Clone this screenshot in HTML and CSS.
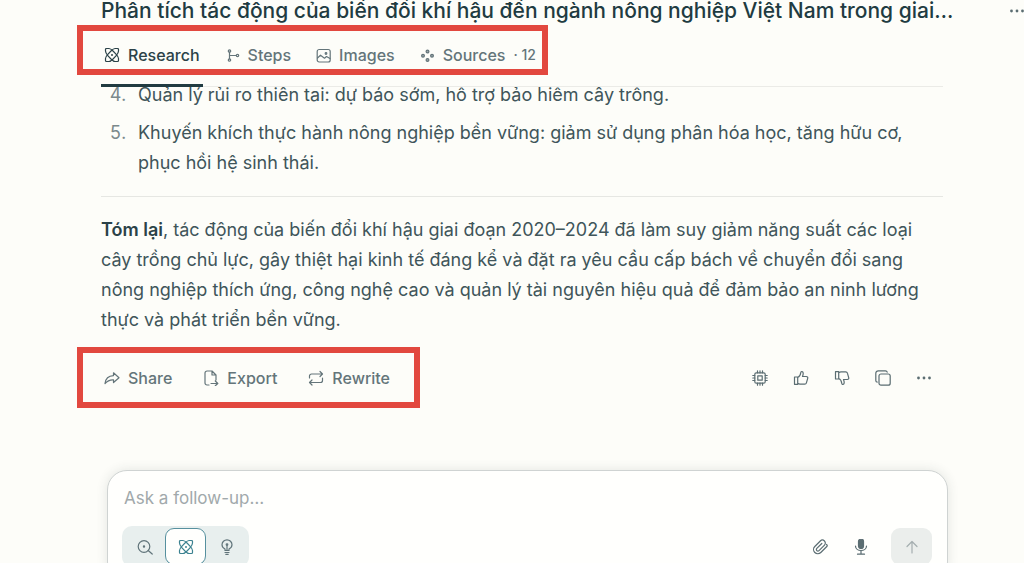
FILE: index.html
```html
<!DOCTYPE html>
<html lang="vi">
<head>
<meta charset="utf-8">
<meta name="viewport" content="width=device-width, initial-scale=1">
<title>Research</title>
<link rel="stylesheet" href="styles.css">
</head>
<body>
<svg class="sprite" aria-hidden="true">
  <symbol id="research" viewBox="0 0 16 16">
    <path d="M1.500 4V2.500q0-1 1-1H5c1.500 0 2.500 1 4 2.500l3 3.200c1.500 1.600 2.500 2.600 2.500 4.300v2q0 1-1 1H11c-1.500 0-2.500-1-4-2.500L4 8.800C2.500 7.200 1.500 6 1.500 4Z"/>
    <path d="M14.500 4V2.500q0-1-1-1H11c-1.500 0-2.500 1-4 2.500L4 7.200c-1.500 1.600-2.500 2.600-2.500 4.300v2q0 1 1 1H5c1.500 0 2.500-1 4-2.500l3-3.200c1.500-1.600 2.500-2.800 2.500-4.800Z"/>
    <circle cx="8" cy="8" r=".4"/>
  </symbol>
  <symbol id="dots" viewBox="0 0 16 16">
    <g fill="currentColor" stroke="none"><circle cx="2.500" cy="8" r="1.400"/><circle cx="8" cy="8" r="1.400"/><circle cx="13.500" cy="8" r="1.400"/></g>
  </symbol>
  <symbol id="thumb" viewBox="0 0 16 16">
    <path d="M1.500 7h3.200v7.300H1.500ZM4.700 7.500c2-.8 2.800-2.500 3.100-5 .2-1.500 2.400-1.300 2.400.8 0 1.200-.3 2.200-.7 3.200h3.800c1.200 0 1.700.8 1.400 1.800l-1.300 4.500c-.2.800-.9 1.300-1.700 1.300H7c-1 0-1.500-.3-2.300-.8Z"/>
  </symbol>
</svg>

<header class="topbar">
  <div class="title-row">
    <h1 class="title">Phân tích tác động của biến đổi khí hậu đến ngành nông nghiệp Việt Nam trong giai…</h1>
    <button class="icon-btn more" aria-label="More"><svg class="icon"><use href="#dots"/></svg></button>
  </div>
  <nav class="tabs">
    <a class="tab active" href="#r"><svg class="icon"><use href="#research"/></svg>Research</a>
    <a class="tab" href="#s"><svg class="icon" viewBox="0 0 16 16"><circle cx="5.500" cy="4" r="1.200"/><circle cx="5.500" cy="13" r="1.200"/><circle cx="13.500" cy="8.500" r="1.200"/><path d="M5.500 5.200v6.600M5.500 8.500h6.800"/></svg>Steps</a>
    <a class="tab" href="#i"><svg class="icon" viewBox="0 0 16 16"><rect x="2.200" y="2.500" width="13" height="12.500" rx="2"/><path d="m2.500 11 3-2.800 4 3 2-1.700 3.500 2"/><circle cx="11" cy="6.500" r=".8"/></svg>Images</a>
    <a class="tab" href="#c"><svg class="icon" viewBox="0 0 16 16"><g fill="currentColor" fill-opacity=".6"><circle cx="8.500" cy="4.500" r="1.400"/><circle cx="8.500" cy="13" r="1.400"/><circle cx="4" cy="8.800" r="1.400"/><circle cx="13" cy="8.800" r="1.400"/></g></svg>Sources <span class="count">· 12</span></a>
  </nav>
</header>

<main class="answer">
  <ol class="list" start="4">
    <li>Quản lý rủi ro thiên tai: dự báo sớm, hỗ trợ bảo hiểm cây trồng.</li>
    <li>Khuyến khích thực hành nông nghiệp bền vững: giảm sử dụng phân hóa học, tăng hữu cơ, phục hồi hệ sinh thái.</li>
  </ol>
  <hr class="rule">
  <p class="summary"><strong>Tóm lại</strong>, tác động của biến đổi khí hậu giai đoạn 2020–2024 đã làm suy giảm năng suất các loại cây trồng chủ lực, gây thiệt hại kinh tế đáng kể và đặt ra yêu cầu cấp bách về chuyển đổi sang nông nghiệp thích ứng, công nghệ cao và quản lý tài nguyên hiệu quả để đảm bảo an ninh lương thực và phát triển bền vững.</p>
  <div class="actions">
    <div class="main-actions">
      <button class="action"><svg class="icon" viewBox="0 0 16 16"><path d="M9.500 2.800 15 7.700l-5.500 4.800V9.800C6 9.600 3.500 10.500 1 13.500 1.500 9 4.500 5.900 9.500 5.600Z"/></svg>Share</button>
      <button class="action"><svg class="icon" viewBox="0 0 16 16"><path d="M6 15H4a2 2 0 0 1-2-2V3a2 2 0 0 1 2-2h5l4 4v5M9 1v4h4M8 13.500h6.500M12.300 11l2.500 2.500-2.500 2.300"/></svg>Export</button>
      <button class="action"><svg class="icon" viewBox="0 0 16 16"><path d="M1.500 8V6a2 2 0 0 1 2-2h10.800M12 1.500 14.500 4 12 6.500M14.500 8v2.500a2 2 0 0 1-2 2H1.700M4 10l-2.500 2.500L4 15"/></svg>Rewrite</button>
    </div>
    <div class="side-actions">
      <button class="icon-btn" aria-label="Model"><svg class="icon" viewBox="0 0 16 16"><rect x="2.800" y="2.800" width="10.400" height="10.400" rx="1.500"/><rect x="5.800" y="5.800" width="4.400" height="4.400"/><path d="M5.500.8v2M8 .8v2M10.500.8v2M5.500 13.200v2M8 13.200v2M10.500 13.200v2M.8 5.500h2M.8 8h2M.8 10.500h2M13.200 5.500h2M13.200 8h2M13.200 10.500h2"/></svg></button>
      <button class="icon-btn" aria-label="Like"><svg class="icon"><use href="#thumb"/></svg></button>
      <button class="icon-btn" aria-label="Dislike"><svg class="icon flip"><use href="#thumb"/></svg></button>
      <button class="icon-btn" aria-label="Copy"><svg class="icon" viewBox="0 0 16 16"><rect x="4" y="4" width="11.200" height="11.200" rx="2"/><path d="M2.200 12.200C1.300 12 .8 11.300.8 10.500V3.300A2.500 2.500 0 0 1 3.300.8h7.200c.8 0 1.500.5 1.700 1.400"/></svg></button>
      <button class="icon-btn" aria-label="More options"><svg class="icon"><use href="#dots"/></svg></button>
    </div>
  </div>
</main>

<form class="composer">
  <input class="prompt" type="text" placeholder="Ask a follow-up…" aria-label="Ask a follow-up">
  <div class="tools">
    <div class="modes">
      <label class="mode"><input type="radio" name="mode" aria-label="Search"><svg class="icon" viewBox="0 0 16 16"><circle cx="7" cy="7.500" r="5.800"/><path d="m11.200 11.500 4 3.500"/><circle cx="7" cy="7.500" r=".6"/></svg></label>
      <label class="mode"><input type="radio" name="mode" aria-label="Research" checked><svg class="icon"><use href="#research"/></svg></label>
      <label class="mode"><input type="radio" name="mode" aria-label="Labs"><svg class="icon" viewBox="0 0 16 16"><path d="M6 11.500V10C4 9 3 7.700 3 5.800a5 5 0 0 1 10 0C13 7.700 12 9 10 10v1.500ZM8 6.500v5M6 13.500h4M6.800 15.300h2.400"/><circle cx="8" cy="5.600" r=".8"/></svg></label>
    </div>
    <div class="send-tools">
      <button type="button" class="icon-btn" aria-label="Attach"><svg class="icon" viewBox="0 0 16 16"><path d="m14.800 7.500-6 6a4.200 4.200 0 0 1-6-6l5.500-5.500a2.900 2.900 0 0 1 4.200 4.100L7 11.600a1.500 1.500 0 0 1-2.200-2.200l5-4.900M14.500 5.500c1 .8 1 1.300.3 2"/></svg></button>
      <button type="button" class="icon-btn" aria-label="Dictate"><svg class="icon" viewBox="0 0 16 16"><rect x="5.500" y="0" width="5" height="9.500" rx="2.500" fill="currentColor"/><path d="M2.500 7c0 6 11 6 11 0M8 11.500V15M4.500 15.200h7"/></svg></button>
      <button class="send" aria-label="Send" disabled><svg class="icon" viewBox="0 0 16 16"><path d="M8 14V2.500M3 7.500l5-5 5 5"/></svg></button>
    </div>
  </div>
</form>
</body>
</html>
```
FILE: styles.css
```css
* { box-sizing: border-box; }
html { height: 100%; overflow: hidden; }
body {
  margin: 0;
  height: 100%;
  overflow: hidden;
  padding: 0 81px 0 101px;
  background: #fdfdf9;
  color: #40555a;
  font-family: Inter, "Noto Sans", sans-serif;
  font-size: 18px;
  line-height: 30px;
}
button, input { font: inherit; color: inherit; }
button { border: 0; padding: 0; background: none; }
.sprite { position: absolute; width: 0; height: 0; }
.icon {
  width: 16px;
  height: 16px;
  flex: none;
  fill: none;
  stroke: currentColor;
  stroke-width: 1.2;
  stroke-linecap: round;
  stroke-linejoin: round;
}
.flip { transform: scaleY(-1); }
.icon-btn { display: flex; color: #5b6d72; }

.topbar {
  position: relative;
  z-index: 1;
  background: #fdfdf9;
  border-bottom: 1px solid #ebebe7;
}
.title-row {
  display: flex;
  align-items: center;
  justify-content: space-between;
  height: 22px;
  margin-right: -82px;
}
.title {
  margin: 0;
  font-size: 21px;
  line-height: 22px;
  font-weight: 500;
  color: #213b41;
  white-space: nowrap;
}
.tabs {
  position: relative;
  display: flex;
  width: fit-content;
  gap: 18px;
  height: 64px;
}
.tabs::before, .main-actions::before {
  content: "";
  position: absolute;
  border: 6px solid #e2483f;
  pointer-events: none;
}
.tabs::before { inset: 3px -9px 11px -24px; }
.tab {
  position: relative;
  display: flex;
  align-items: center;
  gap: 8px;
  padding: 2px 3px 0;
  font-size: 16px;
  font-weight: 500;
  color: #64757a;
  text-decoration: none;
}
.tab.active { color: #2b4248; }
.tab.active::after {
  content: "";
  position: absolute;
  inset: auto 0 -1px;
  height: 3px;
  background: #213b41;
}
.count { font-size: 14px; }

.list {
  margin: -7px 0 0;
  padding-left: 30px;
  display: grid;
  gap: 8px;
}
.list li { padding-left: 7px; }
.list li::marker { color: #7b898c; }
.rule {
  height: 1px;
  margin: 18px 0;
  border: 0;
  background: #e6e7e3;
}
.summary { margin: 0; }
.summary strong { font-weight: 600; color: #2b4248; }
.actions {
  display: flex;
  align-items: center;
  justify-content: space-between;
  margin-top: 13px;
  height: 60px;
}
.main-actions {
  position: relative;
  display: flex;
  align-items: center;
  gap: 31px;
  height: 60px;
  padding-left: 3px;
}
.main-actions::before { inset: -1px -30px 0 -24px; }
.action {
  display: flex;
  align-items: center;
  gap: 8px;
  font-size: 16px;
  font-weight: 500;
  color: #64757a;
}
.side-actions {
  display: flex;
  gap: 25px;
  padding-right: 11px;
}

.composer {
  margin: 62px -5px 0 6px;
  padding: 14px;
  border: 1px solid #cfd3d2;
  border-radius: 20px;
  background: #fffffd;
  box-shadow: 0 0 12px rgb(40 60 60 / 12%);
}
.prompt {
  display: block;
  width: 100%;
  height: 26px;
  padding: 0 2px;
  border: 0;
  outline: 0;
  background: none;
  font-size: 17px;
}
.prompt::placeholder { color: #a1a9ab; opacity: 1; }
.tools {
  display: flex;
  align-items: center;
  justify-content: space-between;
  margin-top: 15px;
}
.modes {
  display: flex;
  padding: 2px;
  border-radius: 10px;
  background: #e8efee;
}
.mode {
  display: grid;
  place-items: center;
  width: 41px;
  height: 37px;
  border-radius: 9px;
  color: #60747a;
}
.mode input { position: absolute; opacity: 0; }
.mode:has(:checked) {
  border: 1px solid #56909e;
  background: #fffffd;
  color: #3c8290;
}
.send-tools { display: flex; align-items: center; gap: 25px; padding-right: 1px; }
.send {
  display: grid;
  place-items: center;
  width: 41px;
  height: 37px;
  border-radius: 9px;
  background: #ebeeec;
  color: #a5aeb0;
}
.send-tools .send { margin-left: -3px; }
```
